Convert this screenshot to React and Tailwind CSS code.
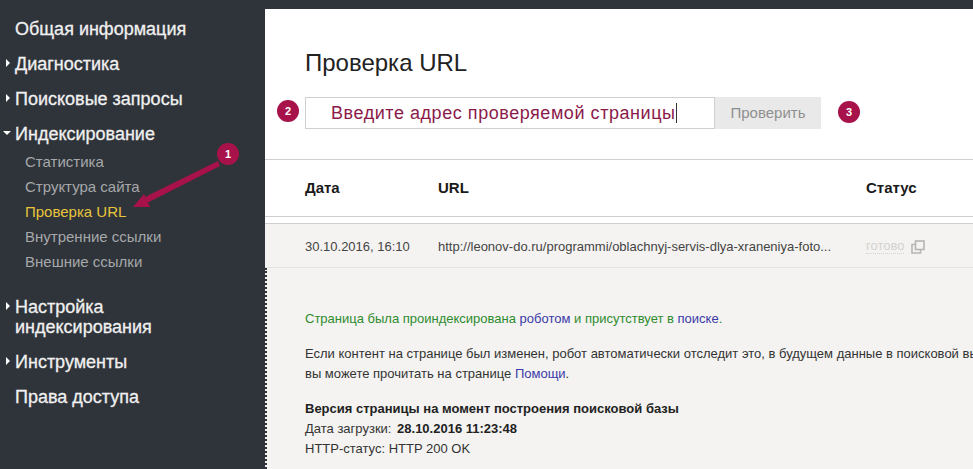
const font = "font-['Liberation_Sans',Arial,sans-serif]";

function Caret({ open }) {
  if (open) {
    return <span className="absolute left-[3px] top-[15px] w-0 h-0 border-x-[4px] border-x-transparent border-t-[4px] border-t-white" />;
  }
  return <span className="absolute left-[6px] top-[13px] w-0 h-0 border-y-[4px] border-y-transparent border-l-[4px] border-l-white" />;
}

function NavItem({ children, caret, open }) {
  return (
    <div className="relative pl-[15px] py-[7.5px] text-[18px] leading-[20px] text-[#f0f0f0] [-webkit-text-stroke:0.3px_#f0f0f0]">
      {caret && <Caret open={open} />}
      {children}
    </div>
  );
}

function SubItem({ children, active }) {
  return (
    <div className={`pl-[25px] h-[25px] text-[15px] leading-[25px] ${active ? "text-[#e8c53a]" : "text-[#a6a8aa]"}`}>
      {children}
    </div>
  );
}

function Badge({ n, className }) {
  return (
    <div className={`absolute w-[22px] h-[22px] rounded-full bg-[#a8124a] text-white text-[11px] font-bold flex items-center justify-center ${className}`}>
      {n}
    </div>
  );
}

function CopyIcon() {
  return (
    <svg className="ml-[7px] text-[#b5b5b3]" width="14" height="14" viewBox="0 0 14 14" fill="none" stroke="currentColor" strokeWidth="1.6">
      <rect x="4.5" y="1" width="8.5" height="8.5" />
      <path d="M4.5 4.5 H1 V13 H9.5 V9.5" />
    </svg>
  );
}

function Sidebar() {
  return (
    <aside className="w-[265px] shrink-0 pt-[11px]">
      <NavItem>Общая информация</NavItem>
      <NavItem caret>Диагностика</NavItem>
      <NavItem caret>Поисковые запросы</NavItem>
      <NavItem caret open>Индексирование</NavItem>
      <div className="-mt-[2px] mb-[15px]">
        <SubItem>Статистика</SubItem>
        <SubItem>Структура сайта</SubItem>
        <SubItem active>Проверка URL</SubItem>
        <SubItem>Внутренние ссылки</SubItem>
        <SubItem>Внешние ссылки</SubItem>
      </div>
      <NavItem caret>Настройка<br />индексирования</NavItem>
      <NavItem caret>Инструменты</NavItem>
      <NavItem>Права доступа</NavItem>
    </aside>
  );
}

export default function App() {
  return (
    <div className={`relative w-[973px] h-[469px] overflow-hidden bg-[#2f343a] flex ${font}`}>
      <Sidebar />
      <main className="flex-1 mt-[9px] min-w-0 bg-white flex flex-col">
        <section className="h-[151px] pl-[40px] border-b border-[#cfcfcf] shrink-0">
          <h1 className="pt-[39px] text-[24px] leading-[30px] text-[#222]">Проверка URL</h1>
          <div className="mt-[19px] flex h-[32px]">
            <div className="w-[410px] border border-[#cfcfcf] pl-[25px] text-[18px] leading-[30px] tracking-[0.55px] text-[#8b1a4a] flex items-center">
              Введите адрес проверяемой страницы
              <span className="ml-[1px] w-px h-[20px] bg-[#333]" />
            </div>
            <div className="w-[106px] bg-[#e9e9e9] text-[15px] leading-[32px] text-center text-[#8f8f8f]">Проверить</div>
          </div>
        </section>
        <div className="h-[57px] shrink-0 flex items-center font-bold text-[15px] text-[#1a1a1a] pl-[40px] border-b border-[#cfcfcf]">
          <div className="w-[133px]">Дата</div>
          <div className="w-[428px]">URL</div>
          <div>Статус</div>
        </div>
        <div className="h-[7px] shrink-0 bg-white border-b border-[#cfcfcf]" />
        <div className="h-[44px] shrink-0 pt-[2px] bg-[#f4f3f1] border-b border-[#e4e3e1] flex items-center pl-[40px] text-[13px] text-[#444]">
          <div className="w-[133px]">30.10.2016, 16:10</div>
          <div className="w-[428px] whitespace-nowrap">http://leonov-do.ru/programmi/oblachnyj-servis-dlya-xraneniya-foto...</div>
          <span className="text-[#d2d2d0] border-b border-dotted border-[#d2d2d0] leading-[14px]">готово</span>
          <CopyIcon />
        </div>
        <section className="flex-1 pl-[38px] border-l-2 border-dotted border-[#2f343a] bg-[#f4f3f1] text-[13px] leading-[20px] text-[#333] whitespace-nowrap overflow-hidden">
          <p className="pt-[41px] text-[#2e8b2e]">
            Страница была проиндексирована <span className="text-[#3a3aa8]">роботом</span> и присутствует в <span className="text-[#3a3aa8]">поиске</span>.
          </p>
          <p className="mt-[15px]">Если контент на странице был изменен, робот автоматически отследит это, в будущем данные в поисковой выдаче</p>
          <p>вы можете прочитать на странице <span className="text-[#3a3aa8]">Помощи</span>.</p>
          <p className="mt-[15px] font-bold text-[#222]">Версия страницы на момент построения поисковой базы</p>
          <p>Дата загрузки: <span className="ml-[2px] font-bold text-[#222]">28.10.2016 11:23:48</span></p>
          <p>HTTP-статус: HTTP 200 OK</p>
        </section>
      </main>

      <svg className="absolute left-[120px] top-[150px]" width="120" height="70" viewBox="0 0 120 70">
        <path d="M98 11 L100 16 L27 53 L25 47 Z" fill="#a8124a" />
        <path d="M13 57 L24 44 L30 57 Z" fill="#a8124a" />
      </svg>
      <Badge n="1" className="left-[217px] top-[143px]" />
      <Badge n="2" className="left-[277px] top-[100px]" />
      <Badge n="3" className="left-[838px] top-[101px]" />
    </div>
  );
}
